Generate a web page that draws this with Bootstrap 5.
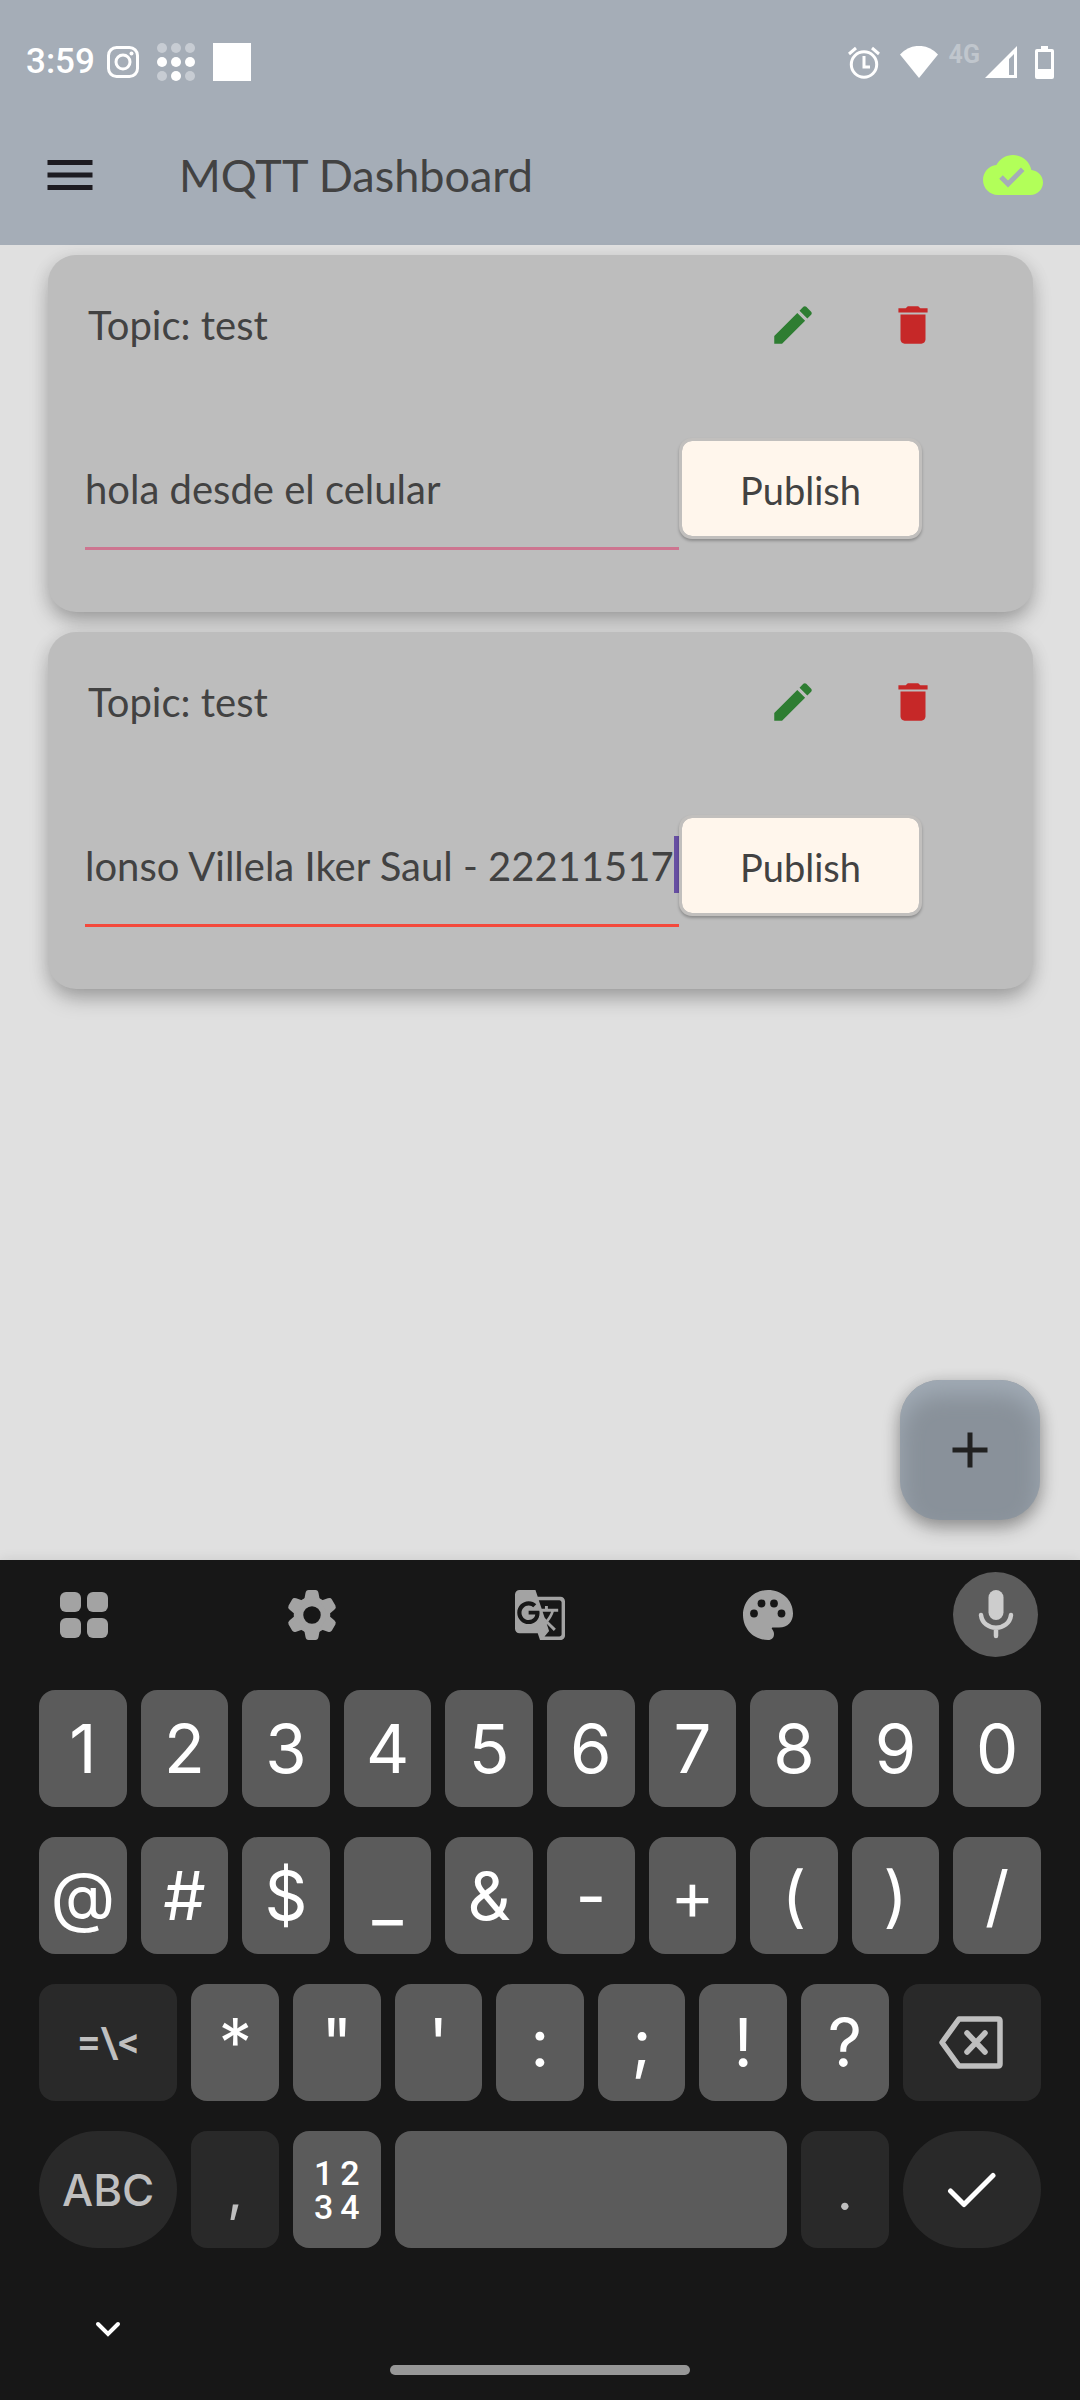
<!DOCTYPE html>
<html lang="es">
<head>
<meta charset="utf-8">
<meta name="viewport" content="width=device-width, initial-scale=1">
<title>MQTT Dashboard</title>
<link href="https://cdn.jsdelivr.net/npm/bootstrap@5.3.0/dist/css/bootstrap.min.css" rel="stylesheet">
<style>
  body { background: #e0e0e0; color: #424242; font-family: Lato, sans-serif; font-size: 40px; line-height: 44px; }
  svg { display: block; flex: none; }
  button { color: inherit; }

  .app-header { background: #a5adb7; }
  .status-bar { height: 105px; padding: 43px 26px 24px; color: #fff; font: 500 35px/38px Roboto, sans-serif; }
  .status-left { gap: 18px; }
  .status-time { margin-right: -6px; }
  .status-right { gap: 20px; }
  .network { gap: 5px; }
  .network-type { font-size: 25px; line-height: 20px; font-weight: 700; color: #c0c6cd; margin: 0 0 14px -9px; }
  .toolbar { height: 140px; padding: 0 37px 0 40px; }
  .toolbar h1 { font-size: 45px; line-height: 54px; margin: 0 0 0 79px; font-weight: 400; }
  .plain-btn { border: 0; background: none; padding: 0; }

  .topics { padding: 10px 47px 40px 48px; }
  .topic-list { gap: 20px; }
  .topic-card { background: #bdbdbd; border-radius: 28px; padding: 10px 60px 62px 37px;
    box-shadow: 0 12px 22px -4px rgba(0,0,0,.26), 0 4px 18px rgba(0,0,0,.12); }
  .topic-name { margin: 0 0 0 3px; }
  .action-btn { width: 120px; height: 120px; }
  .publish-form { margin-top: 43px; padding-right: 50px; }
  .message-field { border-bottom: 3px solid #cd7590; height: 122px; min-width: 0; }
  .message-field.active { border-color: #f4493c; }
  .message-field input { border: 0; outline: 0; background: none; padding: 3px 0 0; width: 100%; min-width: 0; color: inherit; }
  .text-caret { width: 5px; height: 57px; background: #674fa3; flex: none; }
  .publish-btn { width: 243px; height: 101px; border: 3px solid #c1bfbd; border-radius: 13px; background: #fff6ec; background-clip: padding-box;
    margin: 0 1px 2px 0; padding: 4px 0 0; font-size: 38px; box-shadow: 0 2px 3px rgba(0,0,0,.26); }
  .add-btn { right: 40px; bottom: 40px; width: 140px; height: 140px; border: 0; border-radius: 40px; background: #89919a;
    box-shadow: inset 0 14px 22px #a1abb5, 0 8px 18px rgba(0,0,0,.3), 0 2px 16px rgba(0,0,0,.12); }

  .keyboard { background: #171717; padding: 12px 39px 25px; box-shadow: 0 0 12px rgba(0,0,0,.1); font-family: Inter, sans-serif; z-index: 1; }
  .tools { margin: 0 3px 33px 2px; color: #a3a3a3; }
  .tool-btn { width: 85px; height: 85px; border-radius: 50%; }
  .tool-btn.mic { background: #5c5c5c; color: #cdcdcd; }
  .key-grid { display: grid; grid-template-columns: repeat(20, minmax(0, 1fr)); gap: 30px 14px; }
  .key { grid-column: span 2; height: 117px; border: 0; border-radius: 16px; background: #5b5b5b; color: #fff; padding: 0;
    font-size: 67px; line-height: 80px; display: flex; align-items: center; justify-content: center; }
  .key.wide { grid-column: span 3; }
  .key.space { grid-column: span 8; }
  .key.dim { background: #292929; color: #bfbfbf; }
  .key.pill { border-radius: 59px; }
  .key.period { font-size: 56px; }
  .key.letters { font-size: 44px; font-weight: 500; }
  .key.symbols { font: 500 42px/48px Roboto, sans-serif; }
  .key.numpad { font: 500 34px/34px Roboto, sans-serif; display: grid; grid-template-columns: auto auto; gap: 0 7px; align-content: center; }
  .key.enter { color: #fff; }
  .hide-row { padding: 72px 55px 25px; }
  .home-bar { width: 300px; height: 10px; border-radius: 5px; background: #979797; }
</style>
</head>
<body class="d-flex flex-column min-vh-100">

<header class="app-header">
  <div class="status-bar d-flex justify-content-between align-items-center">
    <div class="status-left d-flex align-items-center">
      <span class="status-time">3:59</span>
      <svg width="32" height="32" viewBox="0 0 32 32" fill="none" stroke="#fff" stroke-width="3"><rect x="1.500" y="1.500" width="29" height="29" rx="8"/><circle cx="16" cy="16" r="7"/><circle cx="24.500" cy="7.500" r="2" fill="#fff" stroke="none"/></svg>
      <svg width="38" height="38" viewBox="0 0 38 38" fill="#fff"><g fill="#c7ccd3"><circle cx="5" cy="5" r="5"/><circle cx="19" cy="5" r="5"/><circle cx="33" cy="5" r="5"/><circle cx="5" cy="33" r="5"/><circle cx="33" cy="33" r="5"/></g><circle cx="5" cy="19" r="5"/><circle cx="19" cy="19" r="5"/><circle cx="33" cy="19" r="5"/><circle cx="19" cy="33" r="5"/></svg>
      <svg width="38" height="38"><rect width="38" height="38" fill="#fff"/></svg>
    </div>
    <div class="status-right d-flex align-items-center">
      <svg width="32" height="33" viewBox="0 0 32 33" fill="none" stroke="#fff" stroke-width="3"><circle cx="16" cy="18.500" r="12.700"/><path d="M16 10v11h6M1 8l7-6M31 8l-7-6"/></svg>
      <svg width="38" height="32" viewBox="0 0 38 32" fill="#fff"><path d="M0 8.500C11-3 27-3 38 8.500L19 32z"/></svg>
      <div class="network d-flex align-items-center">
        <span class="network-type">4G</span>
        <svg width="32" height="32" viewBox="0 0 32 32" fill="#fff"><path fill-rule="evenodd" d="M32 0v32H0zM29 8l-5 5v16h5z"/></svg>
        <svg width="32" height="33" viewBox="-13 0 32 33" fill="#fff"><path fill-rule="evenodd" d="M6 0h7v3h4q2 0 2 2v26q0 2-2 2H2q-2 0-2-2V5q0-2 2-2h4zM3 6v17h13V6z"/></svg>
      </div>
    </div>
  </div>
  <nav class="toolbar d-flex align-items-center">
    <button class="plain-btn" type="button" aria-label="Menu"><svg width="60" height="60" viewBox="0 0 24 24" fill="#1d1b20"><path d="M3 18h18v-2H3v2zm0-5h18v-2H3v2zm0-7v2h18V6H3z"/></svg></button>
    <h1>MQTT Dashboard</h1>
    <svg class="ms-auto" width="60" height="60" viewBox="0 0 24 24" fill="#b2ff59"><path d="M19.350 10.040C18.670 6.590 15.640 4 12 4 9.110 4 6.600 5.640 5.350 8.040 2.340 8.360 0 10.910 0 14c0 3.310 2.690 6 6 6h13c2.760 0 5-2.240 5-5 0-2.640-2.050-4.780-4.650-4.960zM10 17l-3.500-3.500 1.410-1.410L10 14.170 15.180 9l1.410 1.410L10 17z"/></svg>
  </nav>
</header>

<main class="topics position-relative flex-grow-1">
  <div class="topic-list d-flex flex-column">
    <section class="topic-card">
      <div class="d-flex align-items-center">
        <p class="topic-name me-auto">Topic: test</p>
        <button class="plain-btn action-btn d-flex align-items-center justify-content-center" type="button" aria-label="Edit"><svg width="50" height="50" viewBox="0 0 24 24" fill="#2e7d32"><path d="M3 17.250V21h3.750L17.810 9.940l-3.750-3.750L3 17.250zM20.710 7.040c.39-.39.39-1.020 0-1.410l-2.340-2.340c-.39-.39-1.020-.39-1.410 0l-1.830 1.830 3.750 3.750 1.830-1.830z"/></svg></button>
        <button class="plain-btn action-btn d-flex align-items-center justify-content-center" type="button" aria-label="Delete"><svg width="50" height="50" viewBox="0 0 24 24" fill="#c62828"><path d="M6 19c0 1.100.9 2 2 2h8c1.100 0 2-.9 2-2V7H6v12zM19 4h-3.500l-1-1h-5l-1 1H5v2h14V4z"/></svg></button>
      </div>
      <form class="publish-form d-flex align-items-center">
        <div class="message-field flex-grow-1 d-flex align-items-center"><input type="text" aria-label="Message" value="hola desde el celular"></div>
        <button class="publish-btn flex-shrink-0" type="button">Publish</button>
      </form>
    </section>
    <section class="topic-card">
      <div class="d-flex align-items-center">
        <p class="topic-name me-auto">Topic: test</p>
        <button class="plain-btn action-btn d-flex align-items-center justify-content-center" type="button" aria-label="Edit"><svg width="50" height="50" viewBox="0 0 24 24" fill="#2e7d32"><path d="M3 17.250V21h3.750L17.810 9.940l-3.750-3.750L3 17.250zM20.710 7.040c.39-.39.39-1.020 0-1.410l-2.340-2.340c-.39-.39-1.020-.39-1.410 0l-1.830 1.830 3.750 3.750 1.830-1.830z"/></svg></button>
        <button class="plain-btn action-btn d-flex align-items-center justify-content-center" type="button" aria-label="Delete"><svg width="50" height="50" viewBox="0 0 24 24" fill="#c62828"><path d="M6 19c0 1.100.9 2 2 2h8c1.100 0 2-.9 2-2V7H6v12zM19 4h-3.500l-1-1h-5l-1 1H5v2h14V4z"/></svg></button>
      </div>
      <form class="publish-form d-flex align-items-center">
        <div class="message-field active flex-grow-1 d-flex align-items-center"><input type="text" aria-label="Message" value="lonso Villela Iker Saul - 22211517"><span class="text-caret"></span></div>
        <button class="publish-btn flex-shrink-0" type="button">Publish</button>
      </form>
    </section>
  </div>
  <button class="add-btn position-absolute d-flex align-items-center justify-content-center" type="button" aria-label="Add"><svg width="60" height="60" viewBox="0 0 24 24" fill="#212121"><path d="M19 13h-6v6h-2v-6H5v-2h6V5h2v6h6v2z"/></svg></button>
</main>

<footer class="keyboard position-relative">
  <div class="tools d-flex justify-content-between">
    <button class="plain-btn tool-btn d-flex align-items-center justify-content-center" type="button" aria-label="Apps"><svg width="48" height="48" viewBox="0 0 48 48" fill="currentColor"><rect x="0" y="1" width="21" height="20" rx="6"/><rect x="27" y="1" width="21" height="20" rx="6"/><rect x="0" y="27" width="21" height="20" rx="6"/><rect x="27" y="27" width="21" height="20" rx="6"/></svg></button>
    <button class="plain-btn tool-btn d-flex align-items-center justify-content-center" type="button" aria-label="Settings"><svg width="50" height="50" viewBox="-25 -25 50 50" fill="currentColor"><defs><path id="tooth" d="M-8-14L-6.500-22Q-6-25-3.500-25H3.500Q6-25 6.500-22L8-14z"/></defs><circle r="13.500" fill="none" stroke="currentColor" stroke-width="9.500"/><use href="#tooth"/><use href="#tooth" transform="rotate(60)"/><use href="#tooth" transform="rotate(120)"/><use href="#tooth" transform="rotate(180)"/><use href="#tooth" transform="rotate(240)"/><use href="#tooth" transform="rotate(300)"/></svg></button>
    <button class="plain-btn tool-btn d-flex align-items-center justify-content-center" type="button" aria-label="Translate"><svg width="50" height="50" viewBox="1 1 22 22" fill="currentColor"><path d="M21 4H11l-1-3H3c-1.100 0-2 .9-2 2v15c0 1.100.9 2 2 2h8l1 3h9c1.100 0 2-.9 2-2V6c0-1.100-.9-2-2-2zM7 16c-2.760 0-5-2.240-5-5s2.240-5 5-5c1.350 0 2.480.5 3.350 1.300L9.030 8.570c-.38-.36-1.040-.78-2.030-.78-1.740 0-3.150 1.440-3.150 3.210S5.260 14.210 7 14.210c2.010 0 2.840-1.440 2.920-2.410H7v-1.710h4.680c.07.31.12.61.12 1.020C11.800 13.970 9.890 16 7 16zm6.170-5.420h3.700c-.43 1.250-1.110 2.430-2.050 3.470-.31-.35-.6-.72-.86-1.100l-.79-2.370zm8.330 9.920c0 .55-.45 1-1 1H14l2-2.500-1.040-3.100 3.100 3.100.92-.92-3.300-3.250.02-.02c1.130-1.250 1.930-2.690 2.400-4.220H20v-1.300h-4.530V8h-1.290v1.290h-1.440L11.460 5.500h9.040c.55 0 1 .45 1 1v14z"/></svg></button>
    <button class="plain-btn tool-btn d-flex align-items-center justify-content-center" type="button" aria-label="Theme"><svg width="50" height="50" viewBox="0 0 50 50" fill="currentColor"><path d="M25 0C11 0 0 11 0 25s11 25 25 25c4 0 6-2.500 6-6 0-2.500-1-3.500-2-5-.7-1 0-1.500 1-1.500h6c9 0 14-6 14-14C50 10 39 0 25 0z"/><g fill="#171717"><circle cx="11" cy="23.500" r="3.900"/><circle cx="18.500" cy="13.500" r="3.900"/><circle cx="31" cy="13.500" r="3.900"/><circle cx="38.500" cy="23.500" r="3.900"/></g></svg></button>
    <button class="plain-btn tool-btn mic d-flex align-items-center justify-content-center" type="button" aria-label="Voice input"><svg width="36" height="50" viewBox="0 0 36 50"><rect x="10.500" y="0" width="15" height="30" rx="7.500" fill="currentColor"/><path d="M3 25c2 17 28 17 30 0M18 38v8" fill="none" stroke="currentColor" stroke-width="4.500" stroke-linecap="round"/></svg></button>
  </div>
  <div class="key-grid">
    <button type="button" class="key">1</button><button type="button" class="key">2</button><button type="button" class="key">3</button><button type="button" class="key">4</button><button type="button" class="key">5</button><button type="button" class="key">6</button><button type="button" class="key">7</button><button type="button" class="key">8</button><button type="button" class="key">9</button><button type="button" class="key">0</button>
    <button type="button" class="key">@</button><button type="button" class="key">#</button><button type="button" class="key">$</button><button type="button" class="key">_</button><button type="button" class="key">&amp;</button><button type="button" class="key">-</button><button type="button" class="key">+</button><button type="button" class="key">(</button><button type="button" class="key">)</button><button type="button" class="key">/</button>
    <button type="button" class="key wide dim symbols">=\&lt;</button><button type="button" class="key">*</button><button type="button" class="key">"</button><button type="button" class="key">'</button><button type="button" class="key">:</button><button type="button" class="key">;</button><button type="button" class="key">!</button><button type="button" class="key">?</button>
    <button type="button" class="key wide dim" aria-label="Backspace"><svg width="66" height="54" viewBox="0 0 66 54" fill="none" stroke="currentColor" stroke-width="5.500" stroke-linejoin="round" stroke-linecap="round"><path d="M20 3h39q2 0 2 2v43q0 2-2 2H20L3 26.500zM28 17l18 19M46 17L28 36"/></svg></button>
    <button type="button" class="key wide dim pill letters">ABC</button><button type="button" class="key dim period">,</button><button type="button" class="key numpad"><span>1</span><span>2</span><span>3</span><span>4</span></button><button type="button" class="key space" aria-label="Space"></button><button type="button" class="key dim period">.</button>
    <button type="button" class="key wide dim pill enter" aria-label="Done"><svg width="50" height="36" viewBox="0 0 50 36" fill="none" stroke="currentColor" stroke-width="5" stroke-linejoin="round" stroke-linecap="round"><path d="M3.500 19L17 32.500 46 3.500"/></svg></button>
  </div>
  <div class="hide-row"><button class="plain-btn d-flex" type="button" aria-label="Hide keyboard"><svg width="28" height="20" viewBox="0 0 28 20" fill="none" stroke="#fff" stroke-width="4" stroke-linecap="round"><path d="M4 4l10 10L24 4"/></svg></button></div>
  <div class="home-bar mx-auto"></div>
</footer>

<script src="https://cdn.jsdelivr.net/npm/bootstrap@5.3.0/dist/js/bootstrap.bundle.min.js"></script>
</body>
</html>
